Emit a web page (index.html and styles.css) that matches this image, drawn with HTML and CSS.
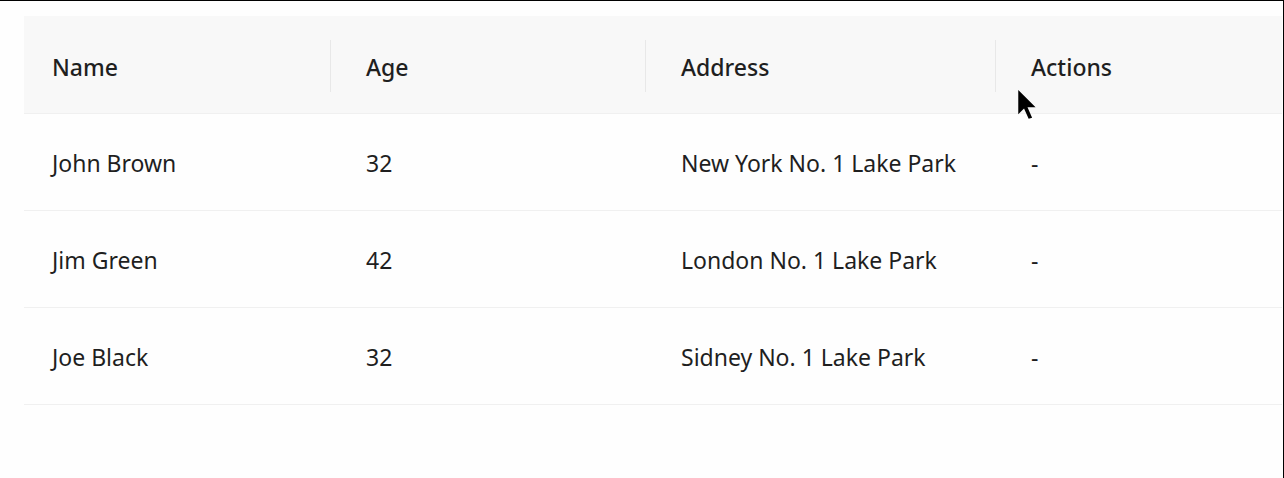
FILE: index.html
```html
<!DOCTYPE html>
<html>
<head>
<meta charset="utf-8">
<link rel="stylesheet" href="styles.css">
</head>
<body>
<div class="frame">
  <div class="table">
    <div class="row head">
      <div class="cell c1">Name</div>
      <div class="cell c2 sep">Age</div>
      <div class="cell c3 sep">Address</div>
      <div class="cell c4 sep">Actions</div>
    </div>
    <div class="row">
      <div class="cell c1">John Brown</div>
      <div class="cell c2">32</div>
      <div class="cell c3">New York No. 1 Lake Park</div>
      <div class="cell c4">-</div>
    </div>
    <div class="row">
      <div class="cell c1">Jim Green</div>
      <div class="cell c2">42</div>
      <div class="cell c3">London No. 1 Lake Park</div>
      <div class="cell c4">-</div>
    </div>
    <div class="row">
      <div class="cell c1">Joe Black</div>
      <div class="cell c2">32</div>
      <div class="cell c3">Sidney No. 1 Lake Park</div>
      <div class="cell c4">-</div>
    </div>
  </div>
  <svg class="cursor" width="21" height="30" viewBox="0 0 16 26"><path d="M0 0 L0 21 L5 16 L9 25 L12 24 L8 15 L15 15 Z" fill="#000"/></svg>
</div>
</body>
</html>
```
FILE: styles.css
```css
html, body {
  margin: 0;
  padding: 0;
  background: #fff;
}
.frame {
  position: relative;
  width: 1284px;
  height: 478px;
  border-top: 1px solid #000;
  border-right: 1px solid #000;
  background: #fefefe;
  padding: 15px 0 0 24px;
  box-sizing: border-box;
  font-family: "Noto Sans", "Open Sans", sans-serif;
  color: #1f1f1f;
}
.table {
  width: 1258px;
}
.row {
  display: flex;
  height: 96px;
  border-bottom: 1px solid #f0f0f0;
  align-items: center;
}
.row.head {
  height: 97px;
  background: #f8f8f8;
  font-weight: 500;
  border-bottom: 1px solid #f0f0f0;
}
.cell {
  position: relative;
  font-size: 23px;
  line-height: 38px;
  box-sizing: border-box;
  padding-left: 36px;
  padding-top: 2px;
  height: 100%;
  display: flex;
  align-items: center;
}
.head .cell { padding-top: 4px; }
.c1 { width: 306px; padding-left: 28px; }
.c2 { width: 315px; }
.c3 { width: 350px; }
.c4 { flex: 1; }
.sep::before {
  content: "";
  position: absolute;
  left: 0;
  top: 24px;
  width: 1px;
  height: 52px;
  background: #e8e8e8;
}
.cursor {
  position: absolute;
  left: 1017px;
  top: 89px;
}
```
